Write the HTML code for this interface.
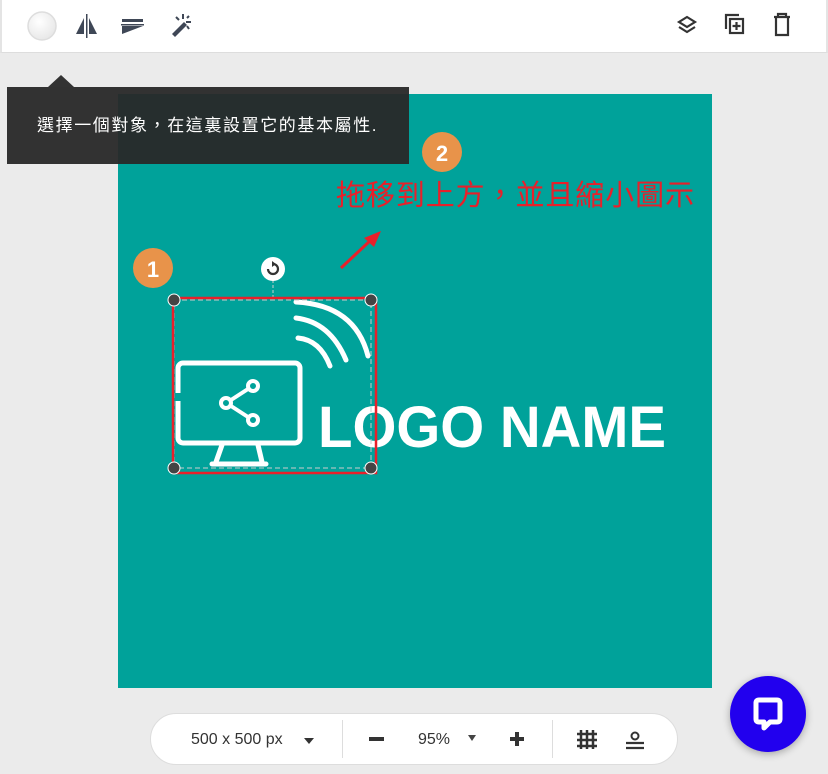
<!DOCTYPE html><html><head><meta charset="utf-8"><style>
*{margin:0;padding:0;box-sizing:border-box}
body{width:828px;height:774px;overflow:hidden;background:#ebebeb;font-family:"Liberation Sans","Noto Sans CJK TC",sans-serif;position:relative}
.top{position:absolute;left:0;top:0;width:828px;height:53px;background:#fff;border-bottom:1px solid #ddd;border-left:2px solid #e4e4e4;border-right:2px solid #e4e4e4}
.tip{position:absolute;left:7px;top:87px;width:402px;height:77px;background:rgba(40,40,40,.95);color:#fff;font-size:17px;letter-spacing:1.6px;line-height:77px;padding-left:30px;z-index:3;white-space:nowrap}
.arr{position:absolute;left:48px;top:75px;width:0;height:0;border-left:13px solid transparent;border-right:13px solid transparent;border-bottom:12px solid #333;z-index:3}
.pill{position:absolute;left:150px;top:713px;width:528px;height:52px;background:#fff;border-radius:26px;border:1px solid #ddd;font-size:16px;color:#333}
.chat{position:absolute;left:730px;top:676px;width:76px;height:76px;border-radius:50%;background:#2200ee;box-shadow:0 2px 8px rgba(0,0,0,.3)}
</style></head><body>
<div class="top">
<svg width="828" height="52" style="position:absolute;left:-2px;top:0">
<defs><radialGradient id="g" cx="40%" cy="35%" r="70%"><stop offset="0" stop-color="#fff"/><stop offset="1" stop-color="#e6e6e6"/></radialGradient></defs>
<circle cx="42" cy="26" r="14" fill="url(#g)" stroke="#ddd" stroke-width="1.5"/>
<path d="M84 18 L84 34 L76 34 Z" fill="#3f4756"/><rect x="86" y="14" width="1.5" height="24" fill="#3f4756"/><path d="M89 18 L97 34 L89 34 Z" fill="#3f4756"/>
<path d="M122 19 L143 19 L143 22 L122 22Z M122 26 L143 26 L122 34 Z" fill="#3f4756"/><rect x="121" y="24" width="23" height="1.5" fill="#3f4756"/>
<path d="M172 34 L184 22 L187 25 L175 37 Z" fill="#3f4756"/>
<g stroke="#3f4756" stroke-width="2"><line x1="183" y1="14" x2="183" y2="19"/><line x1="186" y1="22" x2="191" y2="22"/><line x1="176" y1="17" x2="179" y2="20"/><line x1="189" y1="16" x2="187" y2="18"/><line x1="187" y1="26" x2="189" y2="29"/></g>
<g fill="none" stroke="#333" stroke-width="2.2"><path d="M687 17 L695 22 L687 27 L679 22 Z"/><path d="M679 27 L687 32 L695 27"/>
<rect x="730" y="19" width="13" height="14"/><path d="M726 29 V15 H739"/><path d="M736.5 22 V30 M732.5 26 H740.5"/>
<path d="M774 17 H790 M778 17 V14 H786 V17 M776 17 V35 H788 V17"/></g>
</svg></div>
<div class="arr"></div>
<div class="tip">選擇一個對象，在這裏設置它的基本屬性.</div>
<svg width="828" height="774" style="position:absolute;left:0;top:0">
<rect x="118" y="94" width="594" height="594" fill="#00a29a"/>
<circle cx="153" cy="268" r="20" fill="#e8934a"/><text x="153" y="277" font-size="22" font-weight="bold" fill="#fff" text-anchor="middle" font-family="Liberation Sans">1</text>
<circle cx="442" cy="152" r="20" fill="#e8934a"/><text x="442" y="161" font-size="22" font-weight="bold" fill="#fff" text-anchor="middle" font-family="Liberation Sans">2</text>
<text x="336" y="205" font-size="29" fill="#e8202a" textLength="358" font-family="Noto Sans CJK TC,sans-serif">拖移到上方，並且縮小圖示</text>
<line x1="341" y1="268" x2="372" y2="239" stroke="#e8202a" stroke-width="3"/><path d="M381 231 L364 238 L374 247Z" fill="#e8202a"/>
<g fill="none" stroke="#fff" stroke-width="5" stroke-linecap="round">
<rect x="178" y="363" width="122" height="80" rx="5"/>
<path d="M296 318 Q330 322 346 360 M296 302 Q355 305 368 356 M298 338 Q320 340 330 366"/>
<circle cx="253" cy="386" r="5" stroke-width="4"/><circle cx="226" cy="403" r="5" stroke-width="4"/><circle cx="253" cy="420" r="5" stroke-width="4"/>
<path d="M231 400 L248 389 M231 406 L248 417" stroke-width="4"/>
<path d="M222 445 L216 462 M258 445 L262 462 M212 464 H266"/></g>
<rect x="174" y="393" width="7" height="8" fill="#00a29a"/>
<text x="318" y="447" font-size="58" font-weight="bold" fill="#fff" textLength="348" lengthAdjust="spacingAndGlyphs" font-family="Liberation Sans">LOGO NAME</text>
<line x1="273" y1="280" x2="273" y2="298" stroke="#ccc" stroke-width="1" stroke-dasharray="3 2"/>
<circle cx="273" cy="269" r="12" fill="#fff"/><path d="M268 269 A5 5 0 1 0 273 264" fill="none" stroke="#333" stroke-width="2.2"/><path d="M272 261 L276 264 L272 267Z" fill="#333"/>
<rect x="174" y="300" width="197" height="168" fill="none" stroke="#ccc" stroke-width="1" stroke-dasharray="5 3"/>
<rect x="173" y="298" width="203" height="175" fill="none" stroke="#e8202a" stroke-width="2.5"/>
<g fill="#444" stroke="#fff" stroke-width="1"><circle cx="174" cy="300" r="6"/><circle cx="371" cy="300" r="6"/><circle cx="174" cy="468" r="6"/><circle cx="371" cy="468" r="6"/></g>
</svg>
<div class="pill">
<span style="position:absolute;left:40px;top:17px">500 x 500 px</span>
<svg width="528" height="52" style="position:absolute;left:-1px;top:-1px">
<path d="M154 25 L164 25 L159 31Z" fill="#333"/>
<rect x="192" y="7" width="1" height="38" fill="#ddd"/>
<rect x="219" y="24" width="15" height="4" fill="#333"/>
<path d="M318 22 L326 22 L322 28Z" fill="#444"/>
<rect x="360" y="24" width="14" height="4" fill="#333"/><rect x="365" y="19" width="4" height="14" fill="#333"/>
<rect x="402" y="7" width="1" height="38" fill="#ddd"/>
<g stroke="#333" stroke-width="2.5"><path d="M431 17V36 M437 17V36 M443 17V36 M427 21H447 M427 27H447 M427 33H447"/></g>
<circle cx="485" cy="23" r="3.5" fill="none" stroke="#333" stroke-width="2"/><path d="M476 30H494 M476 35H494" stroke="#333" stroke-width="2.2"/>
</svg>
<span style="position:absolute;left:267px;top:17px">95%</span>
</div>
<div class="chat"><svg width="76" height="76"><path d="M29 24 H47 Q50 24 50 27 V43 Q50 46 47 46 H40 L34 52 V46 H29 Q26 46 26 43 V27 Q26 24 29 24 Z" fill="none" stroke="#fff" stroke-width="5" stroke-linejoin="round"/></svg></div>
</body></html>
